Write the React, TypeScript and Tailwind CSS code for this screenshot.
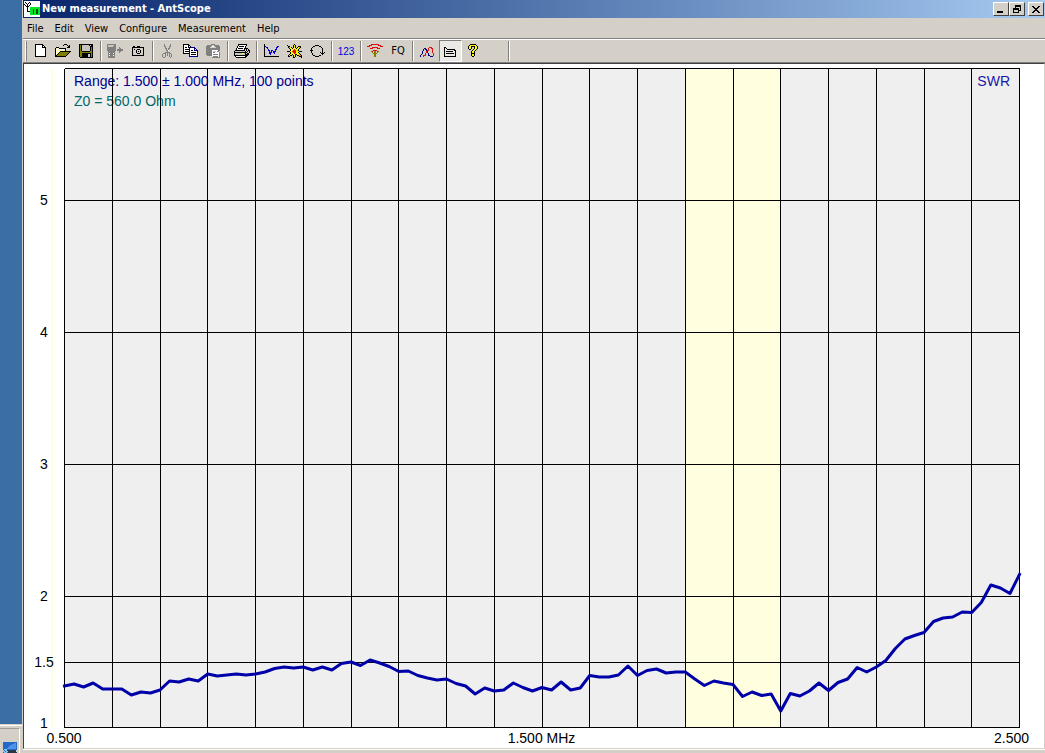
import React from "react";

const PALETTE: Record<string, string> = {
  k: "#000000",
  w: "#ffffff",
  g: "#808080",
  l: "#c8c6c0",
  y: "#808000",
  Y: "#ffff00",
  c: "#ffff99",
  b: "#0000e0",
  n: "#000080",
  r: "#e01010",
  o: "#ff9000",
  G: "#00e820",
  D: "#005000",
  s: "#2468c8",
  S: "#4c94e8",
  t: "#283848",
  T: "#88c8f0",
};

function Pixels({ rows }: { rows: string[] }) {
  const width = Math.max(...rows.map((r) => r.length));
  return (
    <svg width={width} height={rows.length} shapeRendering="crispEdges" aria-hidden="true" className="shrink-0">
      {rows.flatMap((row, y) =>
        row.split("").map((ch, x) =>
          PALETTE[ch] ? <rect key={`${x}-${y}`} x={x} y={y} width="1" height="1" fill={PALETTE[ch]} /> : null,
        ),
      )}
    </svg>
  );
}

const APP = [
  "wwwwwwwwwwwwwwww",
  "wkwwwkwwwwwwwwww",
  "wwkwkwkwwwwwwwww",
  "kwwkwwkwwwwwwwww",
  "wkwkwkwwwwwwwwww",
  "wwkkkwwwwwwwwwww",
  "wwwkwwGGGGGGGGGG",
  "wwwkwwGGGGGGGGGG",
  "wwwkwwGGGDGGDDGG",
  "wwwkwwGGGDGGDDGG",
  "wwwkkkGGGDGGDDGG",
  "wwwwwwGGGDGGDDGG",
  "wwwwwwGGGDGGDDGG",
  "wwwwwwGGGGGGGGGG",
  "wwwwwwwwwwwwwwww",
  "wwwwwwwwwwwwwwww",
];
const NEW = [
  "kkkkkkkk...",
  "kwwwwwwkk..",
  "kwwwwwwkwk.",
  "kwwwwwwkkkk",
  "kwwwwwwwwwk",
  "kwwwwwwwwwk",
  "kwwwwwwwwwk",
  "kwwwwwwwwwk",
  "kwwwwwwwwwk",
  "kwwwwwwwwwk",
  "kwwwwwwwwwk",
  "kwwwwwwwwwk",
  "kkkkkkkkkkk",
];
const OPEN = [
  ".........kkk....",
  "........k...k.k.",
  ".............kk.",
  ".kkk........kkk.",
  "kcwckkkkkkk.....",
  "kwcwcwcwcwk.....",
  "kcwcwcwcwck.....",
  "kwcwckkkkkkkkkkk",
  "kcwckyyyyyyyyyk.",
  "kwckyyyyyyyyyk..",
  "kckyyyyyyyyyk...",
  "kkyyyyyyyyyk....",
  "kkkkkkkkkkk.....",
];
const SAVE = [
  "kkkkkkkkkkkkkk",
  "kyklllllllklkk",
  "kykllllllllkkk",
  "kykllllllllkyk",
  "kykllllllllkyk",
  "kykllllllllkyk",
  "kykllllllllkyk",
  "kyykkkkkkkkyyk",
  "kyyyyyyyyyyyyk",
  "kyykkkkkkkkkyk",
  "kyykkkkkkllkyk",
  "kyykkkkkkllkyk",
  "kyykkkkkkllkyk",
  ".kkkkkkkkkkkkk",
];
const DEVICE = [
  "ggggggggg.......",
  "gllllllgg.......",
  "glllllggg.......",
  "ggggggggg...g...",
  "ggggggggg...gg..",
  "ggggggggg.gggggg",
  "ggggggggg.gggggg",
  ".ggggggg....gg..",
  ".ggggggg....g...",
  ".gwgggwg........",
  ".ggggggg........",
  ".gwgggwg........",
  ".ggggggg........",
  ".ggggggg........",
];
const CAMERA = [
  ".kk..kkk....",
  "kkkkkkkkkkkk",
  "k..........k",
  "k.k..kkk...k",
  "k...k...k..k",
  "k...k.k.k..k",
  "k...k...k..k",
  "k....kkk...k",
  "k..........k",
  "kkkkkkkkkkkk",
];
const CUT = [
  "..g.....g.",
  "..g.....g.",
  "..gg...gg.",
  "...g...g..",
  "...gg.gg..",
  "....g.g...",
  "....ggw...",
  ".....g....",
  "...ggggg..",
  ".ggg.g.gg.",
  "g..g.g.g.g",
  "g..g.g.g.g",
  "g..g...g.g",
  ".gg.....g.",
];
const COPY = [
  "kkkkkk.........",
  "kwwwwkk........",
  "kwwwwkwk.......",
  "kwkkwknnnnnn...",
  "kwwwwwnwwwwnn..",
  "kwkkkknwwwwnwn.",
  "kwwwwwnwkkwnnnn",
  "kwkkkknwwwwwwwn",
  "kwwwwwnwkkkkkwn",
  "kkkkkknwwwwwwwn",
  "......nwkkkkkwn",
  "......nwwwwwwwn",
  "......nnnnnnnnn",
];
const PASTE = [
  ".....gggg.....",
  ".ggggg..ggggg.",
  "ggggg.ww.ggggg",
  "gggg......gggg",
  "gggggggggggggg",
  "gggggggggggggg",
  "ggggggwwwwwwgg",
  "ggggggwlllwgg.",
  "ggggggwggwwwwg",
  "ggggggwwwwwwwg",
  "ggggggwgggggwg",
  ".gggggwwwwwwwg",
  "......wgggggwg",
  "......gggggggg",
];
const PRINT = [
  "....kkkkkkkkk...",
  "....kwwwwwwwk...",
  "...kwkkkkkwk....",
  "...kwwwwwwwk....",
  "..kwkkkkkwkkkk..",
  "..kwwwwwwwk.k.k.",
  ".kkkkkkkkkk.k.kk",
  "kllllllllllk.klk",
  "kkkkkkkkkkkkkllk",
  "klllllllYYlklkk.",
  "kllllllllllkkkk.",
  "kkkkkkkkkkkkkk..",
  ".kwwwwwwwwwkk...",
  "..kkkkkkkkkk....",
];
const GRAPH = [
  "k..............",
  "k..............",
  "kb...........bb",
  "k.bb........bb.",
  "k..b........b..",
  "k...b......bb..",
  "k...bb.bb..b...",
  "k....b.b.bbb...",
  "k....bbb.bb....",
  "k....bb...b....",
  "k.....b........",
  "k..............",
  "kkkkkkkkkkkkkkk",
];
const STAR = [
  ".......k.......",
  "k.....kYk......",
  ".kk...kYk..kkk.",
  ".koYk.kYk.kYok.",
  "..kYYkYYYkYYk..",
  "...kYYYrYYYk...",
  "...kYYrrrYok...",
  "kkkYYrrrrYYYkkk",
  "...kYYrrrYYk...",
  "...kYYYroYYYk..",
  "..kYYkYYkkYYok.",
  ".kYkk.kYk.kkook",
  ".kk...kYk...kkk",
  "......kk......k",
];
const CYCLE = [
  ".....kkkk.....",
  "...kk....kk...",
  "..k........k..",
  ".k..........k.",
  ".k..........k.",
  "kkk.........k.",
  ".k..........k.",
  ".k........k.k.k",
  "..k........kkk",
  "..k.........k.",
  "...kk....kk...",
  ".....kkkk.....",
];
const ANTENNA = [
  "....rrrrrrrr....",
  "..rrr......rrr..",
  "rrr..........rrr",
  ".....rrrrrr.....",
  "...rrr....rrr...",
  "................",
  "......rrrr......",
  "....yr.yy.ry....",
  ".....y.yy.y.....",
  "......yyyy......",
  ".......yy.......",
  ".......yy.......",
  ".......yy.......",
];
const CURVES = [
  "..............",
  "..............",
  ".........rrr..",
  "....nn..r..rr.",
  "...n.nn.r...r.",
  "...n..nrr...r.",
  "..n...rn....r.",
  "..n...rn....r.",
  "..n..r..n....r",
  ".n...r..n....r",
  "n..rrr..nn...r",
  "n..r......nnn.",
];
const LEGEND = [
  "kk..........",
  "k.k.........",
  "k..kkkkkkkk.",
  "k.........kk",
  "k.kkkkkkk..k",
  "k..........k",
  "k.kkkkkkkk.k",
  "k..........k",
  "k..........k",
  "kkkkkkkkkkkk",
];
const HELP = [
  "..kkkkkk..",
  ".kYYYYYYk.",
  "kYYkkkkYYk",
  "kYYk..kYYk",
  "kYYk..kYYk",
  ".kk..kYYk.",
  "....kYYk..",
  "...kYYk...",
  "...kYYk...",
  "...kkkk...",
  "...kYYk...",
  "...kYYk...",
  "....kk....",
];
const MINIMIZE = ["........", "........", "........", "........", "........", "........", "kkkkkk..", "kkkkkk.."];
const RESTORE = ["..kkkkkk", "..kkkkkk", "..k....k", "kkkkkk.k", "kkkkkk.k", "k....kkk", "k....k..", "kkkkkk.."];
const CLOSE = ["kk....kk", ".kk..kk.", "..kkkk..", "...kk...", "..kkkk..", ".kk..kk.", "kk....kk"];
const MONITOR = [
  "ssssssssssssss",
  "sssssssssssSSs",
  "sssssssssSSSSs",
  "sssssssSSSSSSs",
  "ssssssSSSSSSSs",
  "sssssSSSSSSSSs",
  "ssssSSSSSSSSSs",
  "sTTTssssssssss",
  "TsTTttttttttt.",
  "TTsTTtttttttt.",
  "sTTTsttttttttt",
];

type Tool = { label: string; rows?: string[]; text?: string; tone?: string; pressed?: boolean };

const TOOL_GROUPS: Tool[][] = [
  [
    { label: "New", rows: NEW },
    { label: "Open", rows: OPEN },
    { label: "Save", rows: SAVE },
  ],
  [
    { label: "Read device", rows: DEVICE },
    { label: "Snapshot", rows: CAMERA },
  ],
  [
    { label: "Cut", rows: CUT },
    { label: "Copy", rows: COPY },
    { label: "Paste", rows: PASTE },
  ],
  [{ label: "Print", rows: PRINT }],
  [
    { label: "Graph", rows: GRAPH },
    { label: "Measure", rows: STAR },
    { label: "Repeat", rows: CYCLE },
  ],
  [{ label: "Values", text: "123", tone: "pt-[2px] font-['Liberation_Sans',Arial,sans-serif] text-[10px] text-[#0000e0]" }],
  [
    { label: "Antenna", rows: ANTENNA },
    { label: "Frequency", text: "FQ", tone: "pt-[2px] text-black" },
  ],
  [
    { label: "Curves", rows: CURVES },
    { label: "Legend", rows: LEGEND, pressed: true },
    { label: "Help", rows: HELP },
  ],
];

const MENUS = ["File", "Edit", "View", "Configure", "Measurement", "Help"];

// Plot space: 955 x 659 units, SWR 6 at the top and SWR 1 at the bottom.
const PLOT_W = 955;
const PLOT_H = 659;
const TRACE = [
  618, 616, 619, 615, 621, 621, 621, 627, 624, 625, 622, 613, 614, 611, 613, 606, 608, 607, 606, 607, 606, 604, 600.5,
  599, 600, 599, 602, 599, 602, 595.5, 594, 597.5, 592, 595, 598.5, 603.5, 603, 607.5, 610, 612, 611, 615.5, 618, 626,
  620, 623, 622, 615, 619.5, 623, 619.5, 622, 614, 622, 620, 607.5, 609, 609, 607, 598, 607.5, 602.5, 601, 605, 604, 604,
  611, 617.5, 613, 615, 616.5, 628.5, 624, 627.5, 626, 643, 625.5, 628, 623, 615, 622.5, 614.5, 611, 599.5, 604, 599,
  592.5, 580.5, 571, 567.5, 564.5, 553.5, 550, 549, 544, 544.5, 534.5, 517, 520, 525.5, 506.5,
];
const POINTS = TRACE.map((y, i) => `${((i * PLOT_W) / 100).toFixed(2)},${y}`).join(" ");

const LEVELS = [
  { at: 132, label: "5" },
  { at: 264, label: "4" },
  { at: 396, label: "3" },
  { at: 528, label: "2" },
  { at: 594, label: "1.5" },
];
const pct = (v: number, total: number) => `${(v / total) * 100}%`;

function Chart() {
  return (
    <svg className="min-h-0 w-full flex-1 overflow-visible font-['Liberation_Sans',Arial,sans-serif] text-[14px]" role="img" aria-label="SWR chart">
      <rect width="100%" height="100%" fill="#efefef" />
      <rect x="65%" width="10%" height="100%" fill="#ffffdf" />
      <rect x="-13" width="2" height="100%" fill="#ffffdf" />
      <text x="10" y="18" fill="#000090">Range: 1.500 ± 1.000 MHz, 100 points</text>
      <text x="10" y="38" fill="#006868">Z0 = 560.0 Ohm</text>
      <g stroke="#000" strokeWidth="1" shapeRendering="crispEdges" transform="translate(0.5 0.5)">
        {Array.from({ length: 21 }, (_, i) => (
          <line key={i} x1={`${i * 5}%`} x2={`${i * 5}%`} y1="0" y2="100%" />
        ))}
        <line x1="0" x2="100%" y1="0" y2="0" />
        <line x1="0" x2="100%" y1="100%" y2="100%" />
        {LEVELS.map(({ at }) => (
          <line key={at} x1="0" x2="100%" y1={pct(at, PLOT_H)} y2={pct(at, PLOT_H)} />
        ))}
      </g>
      <svg width="100%" height="100%" viewBox={`0 0 ${PLOT_W} ${PLOT_H}`} preserveAspectRatio="none" overflow="visible">
        <polyline points={POINTS} transform="translate(0.5 0)" fill="none" stroke="#0000a8" strokeWidth="3" strokeLinejoin="round" strokeLinecap="square" vectorEffect="non-scaling-stroke" />
      </svg>
      <g transform="translate(-20 5)" textAnchor="middle">
        {LEVELS.map(({ at, label }) => (
          <text key={label} y={pct(at, PLOT_H)}>{label}</text>
        ))}
      </g>
      <text y="100%" textAnchor="middle" transform="translate(-20 1)">1</text>
      <text x="100%" y="18" textAnchor="end" fill="#1818a8" transform="translate(-9 0)">SWR</text>
      <g transform="translate(0 16)">
        <text x="0" y="100%" textAnchor="middle">0.500</text>
        <text x="50%" y="100%" textAnchor="middle">1.500 MHz</text>
        <text x="100%" y="100%" textAnchor="end" transform="translate(10 0)">2.500</text>
      </g>
    </svg>
  );
}

function CaptionButton({ label, rows }: { label: string; rows: string[] }) {
  return (
    <button
      type="button"
      aria-label={label}
      className="flex h-[14px] w-4 items-center justify-center border border-t-white border-r-[#404040] border-b-[#404040] border-l-white bg-[#d4d0c8]"
    >
      <Pixels rows={rows} />
    </button>
  );
}

export default function App() {
  return (
    <div className="flex min-h-screen bg-[#3a6ea5] font-['DejaVu_Sans_Condensed','DejaVu_Sans',sans-serif] text-[11px] text-black">
      <aside className="flex w-[22px] shrink-0 flex-col justify-end">
        <div className="h-[29px] border-t border-[#d4d0c8] bg-[#d4d0c8]">
          <div className="h-full border-t border-white pt-[2px]">
            <div className="flex h-full w-5 items-start overflow-hidden border-t border-r border-t-[#a09c94] border-r-white pt-[13px] pl-[3px]">
              <Pixels rows={MONITOR} />
            </div>
          </div>
        </div>
      </aside>

      <div className="flex min-w-0 flex-1 flex-col border-l border-[#d4d0c8] bg-[#d4d0c8]">
        <header className="flex h-[18px] items-center bg-linear-to-r from-[#0a246a] to-[#a6caf0] pr-[1px] pl-[1px]">
          <Pixels rows={APP} />
          <h1 className="flex-1 pl-[2px] font-bold whitespace-nowrap text-white">New measurement - AntScope</h1>
          <CaptionButton label="Minimize" rows={MINIMIZE} />
          <CaptionButton label="Restore" rows={RESTORE} />
          <div className="w-[3px]" />
          <CaptionButton label="Close" rows={CLOSE} />
        </header>

        <nav className="flex h-5 items-center gap-[11px] pt-[2px] pl-1">
          {MENUS.map((m) => (
            <button key={m} type="button">
              {m}
            </button>
          ))}
        </nav>

        <div className="flex h-[25px] items-center border-t border-b border-t-[#808080] border-b-[#808080] shadow-[inset_0_1px_#fff]">
          <div className="ml-[2px] h-5 w-[2px] border-r border-l border-r-[#808080] border-l-white" />
          <div className="w-[2px]" />
          {TOOL_GROUPS.map((group, gi) => (
            <React.Fragment key={gi}>
              {gi > 0 && (
                <div className="flex w-[6px] justify-center">
                  <div className="h-5 w-[2px] border-r border-l border-r-white border-l-[#808080]" />
                </div>
              )}
              {group.map((t) => (
                <button
                  key={t.label}
                  type="button"
                  aria-label={t.label}
                  className={
                    t.pressed
                      ? "flex h-[22px] w-[23px] items-center justify-center border border-t-[#808080] border-r-white border-b-white border-l-[#808080] bg-[#ebe9e5] pt-[2px] pr-px"
                      : "flex h-[22px] w-[23px] items-center justify-center pr-px"
                  }
                >
                  {t.rows ? <Pixels rows={t.rows} /> : <span className={t.tone}>{t.text}</span>}
                </button>
              ))}
            </React.Fragment>
          ))}
          <div className="ml-[23px] h-5 w-[2px] border-r border-l border-r-white border-l-[#808080]" />
        </div>

        <main className="flex flex-1 flex-col border-t border-r border-b border-l border-t-[#404040] border-r-[#d4d0c8] border-b-[#d4d0c8] border-l-[#404040] bg-white pt-1 pr-[25px] pb-[21px] pl-10">
          <Chart />
        </main>
        <footer className="h-1 border-t border-white" />
      </div>
    </div>
  );
}
